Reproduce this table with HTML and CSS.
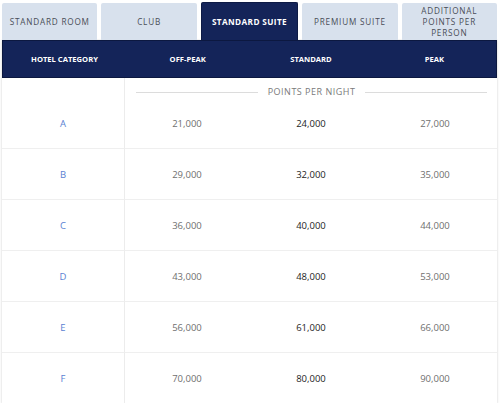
FILE: index.html
```html
<!DOCTYPE html>
<html>
<head>
<meta charset="utf-8">
<link rel="stylesheet" href="styles.css">
</head>
<body>
<div class="wrap">
  <div class="tabs">
    <div class="tab">STANDARD ROOM</div>
    <div class="tab">CLUB</div>
    <div class="tab active">STANDARD SUITE</div>
    <div class="tab">PREMIUM SUITE</div>
    <div class="tab multi">ADDITIONAL<br>POINTS PER<br>PERSON</div>
  </div>
  <div class="card">
    <div class="head">
      <div>HOTEL CATEGORY</div>
      <div>OFF-PEAK</div>
      <div>STANDARD</div>
      <div>PEAK</div>
    </div>
    <div class="body">
      <div class="band-left"></div>
      <div class="band"><span class="rule"></span><span class="band-text">POINTS PER NIGHT</span><span class="rule"></span></div>

      <div class="cat">A</div><div class="num">21,000</div><div class="num std">24,000</div><div class="num">27,000</div>
      <div class="cat">B</div><div class="num">29,000</div><div class="num std">32,000</div><div class="num">35,000</div>
      <div class="cat">C</div><div class="num">36,000</div><div class="num std">40,000</div><div class="num">44,000</div>
      <div class="cat">D</div><div class="num">43,000</div><div class="num std">48,000</div><div class="num">53,000</div>
      <div class="cat">E</div><div class="num">56,000</div><div class="num std">61,000</div><div class="num">66,000</div>
      <div class="cat last">F</div><div class="num last">70,000</div><div class="num std last">80,000</div><div class="num last">90,000</div>
    </div>
  </div>
</div>
</body>
</html>
```
FILE: styles.css
```css
* { box-sizing: border-box; }
html, body { margin: 0; padding: 0; background: #ffffff; }
body { font-family: "Open Sans", "Noto Sans", sans-serif; }
.wrap { padding: 2px 3px 0 2px; width: 500px; }
.tabs { display: flex; gap: 4px; height: 38px; align-items: flex-end; }
.tab {
  flex: 1 1 0;
  height: 37px;
  background: #d8e1ed;
  color: #4a4e57;
  font-size: 8.2px;
  letter-spacing: 0.8px;
  display: flex; align-items: center; justify-content: center;
  text-align: center;
  border-radius: 2px 2px 0 0;
}
.tab.multi { line-height: 11px; }
.tab.active {
  height: 38px;
  background: #142459;
  color: #ffffff;
  font-weight: 700;
  letter-spacing: 0.4px;
  border: 1px solid #0d1a45;
  border-bottom: none;
}
.card { box-shadow: 0 1px 3px rgba(0,0,0,0.12), 0 0 1px rgba(0,0,0,0.15); }
.head {
  display: grid;
  grid-template-columns: 123px 1fr 1fr 1fr;
  height: 38px;
  background: #142459;
  border: 1px solid #0c1840;
  color: #ffffff;
  font-weight: 700;
  font-size: 7.6px;
  align-items: center;
  text-align: center;
}
.body {
  display: grid;
  grid-template-columns: 123px 1fr 1fr 1fr;
  background: #ffffff;
}
.band-left { border-right: 1px solid #ececec; }
.band {
  grid-column: 2 / 5;
  height: 20px;
  padding: 8px 10px 0 11px;
  display: flex; align-items: flex-start; gap: 10px;
  line-height: 12px;
  align-self: start;
}
.rule { flex: 1; height: 1px; background: #dcdcdc; margin-top: 6px; }
.band-text { color: #7a7a7a; font-size: 9px; letter-spacing: 0.5px; }
.cat, .num {
  height: 51px;
  display: flex; align-items: center; justify-content: center;
  font-size: 9.5px;
  border-bottom: 1px solid #efefef;
}
.cat { color: #5a7fd2; border-right: 1px solid #ececec; }
.num { color: #6f6f6f; }
.num.std { color: #1e1e1e; }
.last { border-bottom: none; height: 50px; }
```
